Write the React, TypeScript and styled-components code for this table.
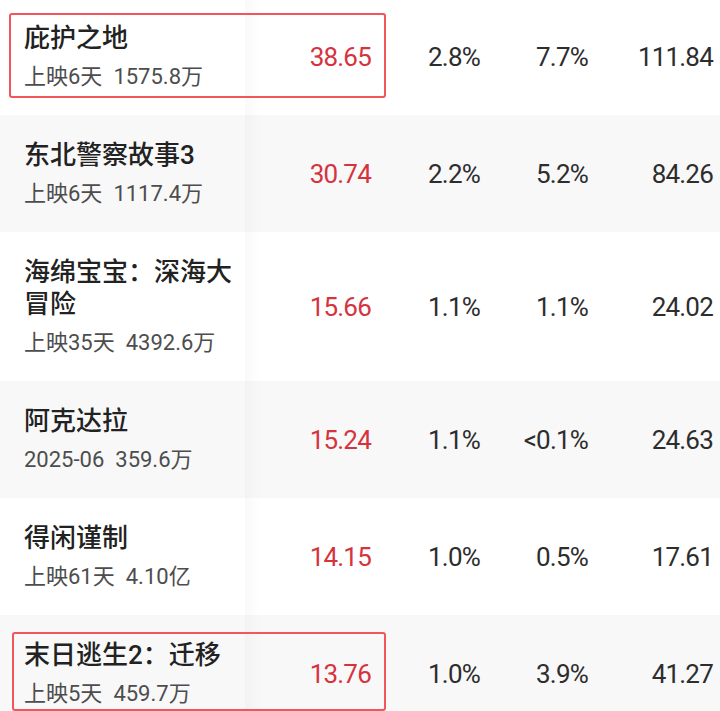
import React from 'react';
import styled, { createGlobalStyle } from 'styled-components';

const GlobalStyle = createGlobalStyle`
  html, body {
    margin: 0;
    padding: 0;
    background: #ffffff;
    overflow: hidden;
  }
  body {
    font-family: Roboto, "Noto Sans CJK SC", sans-serif;
  }
`;

const Table = styled.div`
  width: 720px;
  margin-top: -2px;
  display: flex;
  flex-direction: column;
`;

const Row = styled.div<{ $shaded: boolean }>`
  position: relative;
  display: grid;
  grid-template-columns: 245px 126px 109px 108px 125px 7px;
  align-items: center;
  background: ${(p) => (p.$shaded ? '#f8f8f8' : '#ffffff')};
`;

const NameCell = styled.div`
  position: relative;
  align-self: stretch;
  display: flex;
  flex-direction: column;
  justify-content: center;
  gap: 8px;
  padding: 23.5px 10px 23.5px 24px;

  &::after {
    content: '';
    position: absolute;
    top: 0;
    bottom: 0;
    right: -16px;
    width: 16px;
    background: linear-gradient(to right, rgba(0, 0, 0, 0.022), rgba(0, 0, 0, 0));
  }
`;

const Title = styled.div`
  font-family: Roboto, "Noto Sans CJK SC", sans-serif;
  font-size: 26px;
  line-height: 32px;
  font-weight: 500;
  color: #222222;
`;

const Sub = styled.div`
  display: flex;
  gap: 11px;
  font-size: 22px;
  line-height: 30px;
  color: #4d4d4d;
`;

const Num = styled.div<{ $red?: boolean }>`
  text-align: right;
  font-size: 26px;
  letter-spacing: -0.8px;
  color: ${(p) => (p.$red ? '#d5333e' : '#2d2d2d')};
`;

const Highlight = styled.div<{ $top: number; $height: number; $left: number }>`
  position: absolute;
  left: ${(p) => p.$left}px;
  top: ${(p) => p.$top}px;
  width: ${(p) => 376 - p.$left + 10}px;
  height: ${(p) => p.$height}px;
  border: 2px solid #f0565a;
  border-radius: 3px;
  box-sizing: border-box;
  pointer-events: none;
`;

type Film = {
  name: string;
  meta: [string, string];
  index: string;
  a: string;
  b: string;
  c: string;
  box?: { top: number; height: number; left: number };
};

const films: Film[] = [
  { name: '庇护之地', meta: ['上映6天', '1575.8万'], index: '38.65', a: '2.8%', b: '7.7%', c: '111.84', box: { top: 15, height: 85, left: 9 } },
  { name: '东北警察故事3', meta: ['上映6天', '1117.4万'], index: '30.74', a: '2.2%', b: '5.2%', c: '84.26' },
  { name: '海绵宝宝：深海大冒险', meta: ['上映35天', '4392.6万'], index: '15.66', a: '1.1%', b: '1.1%', c: '24.02' },
  { name: '阿克达拉', meta: ['2025-06', '359.6万'], index: '15.24', a: '1.1%', b: '<0.1%', c: '24.63' },
  { name: '得闲谨制', meta: ['上映61天', '4.10亿'], index: '14.15', a: '1.0%', b: '0.5%', c: '17.61' },
  { name: '末日逃生2：迁移', meta: ['上映5天', '459.7万'], index: '13.76', a: '1.0%', b: '3.9%', c: '41.27', box: { top: 17, height: 79, left: 12 } },
];

export default function App() {
  return (
    <>
      <GlobalStyle />
      <Table>
        {films.map((f, i) => (
          <Row key={f.name} $shaded={i % 2 === 1}>
            <NameCell>
              <Title>{f.name}</Title>
              <Sub>
                <span>{f.meta[0]}</span>
                <span>{f.meta[1]}</span>
              </Sub>
            </NameCell>
            <Num $red>{f.index}</Num>
            <Num>{f.a}</Num>
            <Num>{f.b}</Num>
            <Num>{f.c}</Num>
            <span />
            {f.box && <Highlight $top={f.box.top} $height={f.box.height} $left={f.box.left} />}
          </Row>
        ))}
      </Table>
    </>
  );
}
